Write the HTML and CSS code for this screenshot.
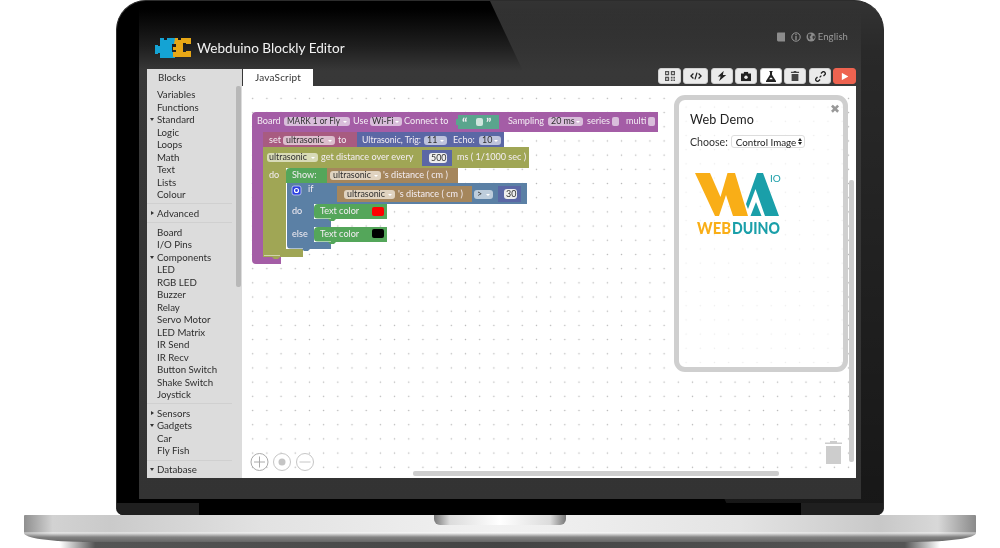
FILE: index.html
```html
<!DOCTYPE html>
<html lang="en">
<head>
<meta charset="utf-8">
<title>Webduino Blockly Editor</title>
<link rel="stylesheet" href="styles.css">
</head>
<body>
<div class="laptop">
  <div class="lid">
    <div class="display">
      <header class="header">
        <svg class="logo" viewBox="0 0 36 20" width="36" height="20">
          <path class="logo-blue" d="M5 0h4v2h3V0h8v6h-3v8h3v6H5v-5H3v1H0V7h3v1h2z"/>
          <path class="logo-yellow" d="M20 0h3v2h3V0h10v6h-5V5h-3v9h3v-1h5v6H18v-5h3v-2h-3V9h3V6h-2z"/>
        </svg>
        <h1 class="title">Webduino Blockly Editor</h1>
        <nav class="links">
          <svg class="link-icon" viewBox="0 0 9 10" width="8" height="10"><path d="M1 0h8v10H1.500Q0 10 0 8.500V1Q0 0 1 0z"/></svg>
          <svg class="link-icon info" viewBox="0 0 10 10" width="10" height="10"><circle class="ring" cx="5" cy="5" r="4.200"/><path d="M4.400 2h1.200v1.200H4.400zM4.400 4h1.200v4H4.400z"/></svg>
          <svg class="link-icon globe" viewBox="0 0 10 10" width="10" height="10"><circle cx="5" cy="5" r="4.500"/><path class="cut" d="M2 2.500l2-1 1.500 1-1 1.500-1 1 1 1.500-.5 1.500-2-2zM6.500 4l2-.5.500 2-1.500 2-1-1.500z"/></svg>
          <span class="lang">English</span>
        </nav>
      </header>
      <div class="app">
        <aside class="side">
          <div class="side-tab">Blocks</div>
          <div class="side-list">
            <div class="cat-group">
              <div class="cat">Variables</div>
              <div class="cat">Functions</div>
              <div class="cat open">Standard</div>
              <div class="cat">Logic</div>
              <div class="cat">Loops</div>
              <div class="cat">Math</div>
              <div class="cat">Text</div>
              <div class="cat">Lists</div>
              <div class="cat">Colour</div>
            </div>
            <div class="cat-group">
              <div class="cat closed">Advanced</div>
            </div>
            <div class="cat-group">
              <div class="cat">Board</div>
              <div class="cat">I/O Pins</div>
              <div class="cat open">Components</div>
              <div class="cat">LED</div>
              <div class="cat">RGB LED</div>
              <div class="cat">Buzzer</div>
              <div class="cat">Relay</div>
              <div class="cat">Servo Motor</div>
              <div class="cat">LED Matrix</div>
              <div class="cat">IR Send</div>
              <div class="cat">IR Recv</div>
              <div class="cat">Button Switch</div>
              <div class="cat">Shake Switch</div>
              <div class="cat">Joystick</div>
            </div>
            <div class="cat-group">
              <div class="cat closed">Sensors</div>
              <div class="cat open">Gadgets</div>
              <div class="cat">Car</div>
              <div class="cat">Fly Fish</div>
            </div>
            <div class="cat-group">
              <div class="cat open">Database</div>
            </div>
          </div>
          <div class="side-scroll"></div>
        </aside>
        <main class="main">
          <div class="tabbar">
            <div class="tab">JavaScript</div>
            <div class="tools">
              <button class="tool dim wide"><svg viewBox="0 0 12 12" width="12" height="12"><path d="M0 0h5v5H0zM7 0h5v5H7zM0 7h5v5H0zM7 7h2v2H7zM10 7h2v2h-2zM7 10h2v2H7zM10 10h2v2h-2z"/><path class="hole" d="M1.500 1.500h2v2h-2zM8.500 1.500h2v2h-2zM1.500 8.500h2v2h-2z"/></svg></button>
              <button class="tool wider"><svg viewBox="0 0 14 10" width="14" height="10"><path class="line" d="M4 2L1 5l3 3M10 2l3 3-3 3M8.200 1L5.800 9"/></svg></button>
              <button class="tool shift"><svg viewBox="0 0 12 12" width="12" height="12"><path d="M8 0L1 6.500h3.500L2.500 12 11 4.800H7z"/></svg></button>
              <button class="tool"><svg viewBox="0 0 12 11" width="12" height="11"><path d="M0 2h3.500V0h5v2H12v9H0z"/><circle class="hole" cx="6" cy="6.300" r="2"/></svg></button>
              <button class="tool white shift"><svg viewBox="0 0 12 13" width="12" height="13"><path d="M4 0h4v1H7.200v3.500L12 12v1H0v-1l4.800-7.500V1H4z"/><path class="hole" d="M5 8h2l1 1.600H4z"/></svg></button>
              <button class="tool dim2"><svg viewBox="0 0 10 12" width="10" height="12"><path d="M3.500 0h3v1H10v1.500H0V1h3.500zM1 3.500h8V12H1z"/></svg></button>
              <button class="tool shift"><svg viewBox="0 0 13 13" width="13" height="13"><path class="line" d="M5.500 7.500l2-2M7 3l1.500-1.500a2 2 0 0 1 3 3L10 6M6 10l-1.500 1.500a2 2 0 0 1-3-3L3 7"/></svg></button>
              <button class="tool run wide"><svg viewBox="0 0 8 9" width="8" height="9"><path d="M0 0l8 4.500L0 9z"/></svg></button>
            </div>
          </div>
          <section class="workspace">
            <svg class="blocks" viewBox="242 86 614 392" width="614" height="392">
              <path class="b-purple" d="M252 116q0-4 4-4h402v20H263v124h18v8H256q-4 0-4-4z"/>
              <path class="b-pink" d="M263 132h94v15h-77l-2 2h-4l-2-2H263z"/>
              <rect class="b-indigo" x="357" y="132" width="147" height="15"/>
              <path class="b-olive" d="M263 147h266v21H286v81h17v8h-23l-2 2h-4l-2-2H263z"/>
              <path class="b-green" d="M290 168h37v15h-41v-11q0-4 4-4z"/>
              <rect class="b-brown" x="327" y="168" width="131" height="15"/>
              <path class="b-steel" d="M287 183h240v21H314v15h17v8h-17v15h17v7h-21l-2 2h-4l-2-2h-11q-4 0-4-4z"/>
              <rect class="b-brown" x="337" y="186" width="135" height="16"/>
              <rect class="b-indigo" x="498" y="186" width="23" height="16"/>
              <rect class="b-indigo" x="422" y="150" width="30" height="16"/>
              <path class="b-green" d="M318 204h69v15h-51l-2 2h-4l-2-2h-10q-4 0-4-4v-7q0-4 4-4z"/>
              <path class="b-green" d="M318 227h69v15h-51l-2 2h-4l-2-2h-10q-4 0-4-4v-7q0-4 4-4z"/>
              <rect class="b-teal" x="458" y="115" width="41" height="14"/>
              <rect class="plug-teal" x="456" y="119" width="3" height="6"/>
              <path class="hl" d="M264 255.500h16M287 248.500h16M315 241.500h16M315 218.500h16"/>

              <text class="t" x="257" y="124">Board</text>
              <rect class="f-purple" x="284" y="117" width="66" height="9" rx="3"/>
              <text class="d" x="287" y="124" textLength="53" lengthAdjust="spacingAndGlyphs">MARK 1 or Fly</text>
              <path class="arr" d="M343 121h4l-2 2z"/>
              <text class="t" x="353" y="124">Use</text>
              <rect class="f-purple" x="370" y="117" width="32" height="9" rx="3"/>
              <text class="d" x="372" y="124">Wi-Fi</text>
              <path class="arr" d="M395 121h4l-2 2z"/>
              <text class="t" x="404" y="124">Connect to</text>
              <text class="t big" x="462" y="128">“</text>
              <rect class="f-str" x="476" y="118" width="7" height="8" rx="2"/>
              <text class="t big" x="486" y="128">”</text>
              <text class="t" x="508" y="124">Sampling</text>
              <rect class="f-purple" x="548" y="117" width="35" height="9" rx="3"/>
              <text class="d" x="551" y="124">20 ms</text>
              <path class="arr" d="M576 121h4l-2 2z"/>
              <text class="t" x="587" y="124">series</text>
              <rect class="f-purple" x="612" y="117" width="7" height="9" rx="2"/>
              <text class="t" x="626" y="124">multi</text>
              <rect class="f-purple" x="648" y="117" width="7" height="9" rx="2"/>

              <text class="t" x="269" y="143">set</text>
              <rect class="f-pink" x="283" y="136" width="52" height="9" rx="3"/>
              <text class="d" x="286" y="143">ultrasonic</text>
              <path class="arr" d="M328 140h4l-2 2z"/>
              <text class="t" x="338" y="143">to</text>
              <text class="t" x="362" y="143" textLength="59" lengthAdjust="spacingAndGlyphs">Ultrasonic, Trig:</text>
              <rect class="f-indigo" x="424" y="136" width="23" height="9" rx="3"/>
              <text class="d" x="427" y="143">11</text>
              <path class="arr" d="M440 140h4l-2 2z"/>
              <text class="t" x="453" y="143">Echo:</text>
              <rect class="f-indigo" x="479" y="136" width="22" height="9" rx="3"/>
              <text class="d" x="482" y="143">10</text>
              <path class="arr" d="M494 140h4l-2 2z"/>

              <rect class="f-olive" x="267" y="153" width="51" height="9" rx="3"/>
              <text class="d" x="269" y="160">ultrasonic</text>
              <path class="arr" d="M311 157h4l-2 2z"/>
              <text class="t" x="321" y="160">get distance over every</text>
              <rect class="f-white" x="429" y="153" width="18" height="10" rx="3"/>
              <text class="d" x="431" y="161">500</text>
              <text class="t" x="457" y="160">ms ( 1/1000 sec )</text>

              <text class="t" x="269" y="178">do</text>
              <text class="t" x="292" y="178">Show:</text>
              <rect class="f-brown" x="330" y="171" width="51" height="9" rx="3"/>
              <text class="d" x="333" y="178">ultrasonic</text>
              <path class="arr" d="M374 175h4l-2 2z"/>
              <text class="t" x="383" y="178">'s distance ( cm )</text>

              <rect class="gear" x="292" y="186" width="9" height="9" rx="2"/>
              <circle class="gear-c" cx="296.500" cy="190.500" r="2"/>
              <text class="t" x="308" y="192">if</text>
              <rect class="f-brown" x="344" y="190" width="51" height="9" rx="3"/>
              <text class="d" x="347" y="197">ultrasonic</text>
              <path class="arr" d="M388 194h4l-2 2z"/>
              <text class="t" x="398" y="197">'s distance ( cm )</text>
              <rect class="f-steel" x="474" y="190" width="19" height="9" rx="3"/>
              <text class="d" x="477" y="197">&gt;</text>
              <path class="arr" d="M486 194h4l-2 2z"/>
              <rect class="f-white" x="504" y="189" width="13" height="10" rx="3"/>
              <text class="d" x="506" y="197">30</text>

              <text class="t" x="292" y="214">do</text>
              <text class="t" x="320" y="214">Text color</text>
              <rect class="c-red" x="372" y="207" width="12" height="9" rx="2"/>
              <text class="t" x="292" y="237">else</text>
              <text class="t" x="320" y="237">Text color</text>
              <rect class="c-black" x="372" y="229" width="12" height="9" rx="2"/>

              <circle class="zoom-ring" cx="259.500" cy="462" r="8.500"/>
              <path class="zoom-line" d="M254 462h11M259.500 456.500v11"/>
              <circle class="zoom-ring light" cx="282" cy="462" r="8.500"/>
              <circle class="zoom-dot" cx="282" cy="462" r="3.500"/>
              <circle class="zoom-ring light" cx="305" cy="462" r="8.500"/>
              <path class="zoom-line light" d="M299.500 462h11"/>
              <path class="bin" d="M830 441h7v1.500h5v1.500h-17v-1.500h5zM826 446h15v18h-15z"/>
            </svg>
            <div class="panel">
              <button class="close">✖</button>
              <h2 class="panel-title">Web Demo</h2>
              <div class="choose">
                <span>Choose:</span>
                <span class="select">Control Image<span class="spin"></span></span>
              </div>
              <svg class="wa" viewBox="0 0 86 64" width="86" height="64">
                <path class="wa-y" d="M0 0h15l10.500 24 7-24H40l13 43H38l-7-21-7 21h-4z"/>
                <path class="wa-t" d="M51 31L62 0h6l16 43H70L60.500 16 53 36zM61 29l5.500 14h-11z"/>
                <text class="wa-io" x="75" y="9">IO</text>
                <text class="wa-word wa-web" x="2" y="61" textLength="34" lengthAdjust="spacingAndGlyphs">WEB</text>
                <text class="wa-word wa-duino" x="37" y="61" textLength="48" lengthAdjust="spacingAndGlyphs">DUINO</text>
              </svg>
            </div>
            <div class="vscroll"></div>
            <div class="hscroll"></div>
          </section>
        </main>
      </div>
    </div>
    <div class="hinge">
      <div class="hinge-side"></div>
      <div class="hinge-mid"></div>
      <div class="hinge-side"></div>
    </div>
  </div>
  <div class="base"><div class="notch"></div></div>
  <div class="foot"></div>
</div>
</body>
</html>
```
FILE: styles.css
```css
* { box-sizing: border-box; }
html, body { margin: 0; padding: 0; }
body {
  width: 1000px;
  height: 548px;
  overflow: hidden;
  background: #fff;
  font-family: "Lato", "Liberation Sans", sans-serif;
  color: #2b2b2b;
}
.laptop { display: flex; flex-direction: column; align-items: center; width: 1000px; }

/* Lid */
.lid {
  position: relative;
  width: 768px;
  height: 515px;
  padding: 0 22px;
  display: flex;
  flex-direction: column;
  background: #000;
  border: 1px solid #2c2c2c;
  border-bottom: 0;
  border-radius: 30px 30px 7px 7px;
  overflow: hidden;
}
.lid::before {
  content: "";
  position: absolute;
  inset: 0;
  background: linear-gradient(rgba(255,255,255,.2), rgba(255,255,255,.16) 10%, rgba(255,255,255,.09));
  clip-path: polygon(373px 0, 100% 0, 100% 100%, 615px 100%);
}
.display {
  position: relative;
  width: 722px;
  height: 498px;
  flex: none;
  background: linear-gradient(rgba(70,70,70,0) 8px, rgba(60,60,60,.5) 45px, #383838 70px, #333 100%);
}
.header {
  height: 67px;
  padding: 37px 13px 0 16px;
  display: flex;
  align-items: flex-start;
  filter: blur(.25px);
}
.logo { flex: none; margin-right: 6px; }
.logo-blue { fill: #14a3d4; }
.logo-yellow { fill: #e7a716; }
.title {
  margin: 2px 0 0;
  font-size: 13.6px;
  line-height: 16px;
  font-weight: 400;
  color: #f2f2f2;
}
.links {
  margin-left: auto;
  margin-top: -7px;
  display: flex;
  align-items: center;
  gap: 4px;
  color: #9b9b9b;
  font-size: 9.5px;
}
.link-icon { fill: #8c8c8c; }
.link-icon.info { margin-left: 2px; fill: #9a9a9a; margin-right: 1px; }
.ring { fill: none; stroke: #9a9a9a; stroke-width: 1; }
.cut { fill: #3a3a3a; }
.lang { margin-left: -2px; letter-spacing: .1px; }

/* App */
.app {
  margin: 1px 0 0 8px;
  width: 709px;
  height: 409px;
  display: flex;
  position: relative;
  filter: blur(.3px);
}
.side {
  position: relative;
  width: 95px;
  flex: none;
  background: #dcdcdc;
  font-size: 9.7px;
  color: #2e2e2e;
  overflow: hidden;
}
.side-tab { height: 17px; padding: 2px 0 0 11px; line-height: 12px; }
.side-list { padding-top: 2px; }
.cat-group { padding-bottom: 2.75px; margin: 0 10px 2.5px 0; border-bottom: 1px solid #d0d0d0; }
.cat-group:last-child { border: 0; }
.cat { position: relative; height: 12.5px; line-height: 12.5px; padding-left: 10px; }
.open::before, .closed::before {
  content: "";
  position: absolute;
  left: 3px;
  top: 5px;
  border-style: solid;
  border-color: transparent;
}
.open::before { border-width: 3px 2.5px 0; border-top-color: #333; }
.closed::before { top: 4px; left: 4px; border-width: 2.5px 0 2.5px 3px; border-left-color: #333; }
.side-scroll {
  position: absolute;
  left: 89px;
  top: 17px;
  width: 5px;
  height: 201px;
  background: #b8b8b8;
  border-radius: 2px;
}
.main { flex: 1; display: flex; flex-direction: column; min-width: 0; margin-left: 1px; }
.tabbar { height: 17px; display: flex; align-items: flex-start; justify-content: space-between; }
.tab {
  width: 70px;
  height: 17px;
  background: #fff;
  font-size: 10px;
  line-height: 16px;
  text-align: center;
  color: #333;
  letter-spacing: .2px;
}
.tools { display: flex; gap: 2px; margin-top: -1px; }
.tool {
  width: 22px;
  height: 16px;
  padding: 0;
  border: 1px solid #cfcfcf;
  border-radius: 3px;
  background: #ebebeb;
  display: flex;
  align-items: center;
  justify-content: center;
}
.tool svg { fill: #222; display: block; transform: scale(.85); }
.tool.dim svg { fill: #555; }
.tool.dim2 svg { fill: #444; }
.tool.white { background: #fff; }
.tool .hole { fill: #ebebeb; }
.tool.white .hole { fill: #fff; }
.tool .line { fill: none; stroke: #222; stroke-width: 1.500; }
.wide { width: 23px; }
.wider { width: 25px; }
.shift { margin-left: 1px; }
.run { background: #ee6350; border-color: #ee6350; }
.tool.run svg { fill: #fff; }

/* Workspace */
.workspace {
  position: relative;
  flex: 1;
  background-color: #fff;
  background-image: radial-gradient(circle, #b4b4b4 .7px, transparent 1px);
  background-size: 14.2px 14.2px;
  background-position: 3.6px 5.3px;
  overflow: hidden;
  margin-left: -1px;
}
.blocks { position: absolute; left: 0; top: 0; font-family: "Lato", "Liberation Sans", sans-serif; }
.b-purple { fill: #a45da6; }
.b-pink { fill: #a85b80; }
.b-indigo { fill: #5b67a5; }
.b-olive { fill: #a0a655; }
.b-green { fill: #54a65a; }
.b-brown { fill: #a5865c; }
.b-steel { fill: #5b80a5; }
.b-teal { fill: #5aa58d; }
.plug-teal { fill: #5aa58d; }
.hl { fill: none; stroke: #fff; stroke-width: 1; opacity: .5; }
.t { fill: #f3edf3; font-size: 9.100px; }
.t.big { font-size: 14px; font-weight: 700; }
.d { fill: #2f2f2f; font-size: 8.900px; }
.arr { fill: #fff; }
.f-purple { fill: #d9bedb; }
.f-pink { fill: #dcbecd; }
.f-indigo { fill: #bec3dc; }
.f-olive { fill: #d8dbb8; }
.f-brown { fill: #e0d3c0; }
.f-steel { fill: #becddc; }
.f-white { fill: #eee; }
.f-str { fill: #cfe6dd; }
.gear { fill: #2b3fe0; stroke: #dfe3ff; stroke-width: .7; }
.gear-c { fill: none; stroke: #fff; stroke-width: 1.200; }
.c-red { fill: #f00; }
.c-black { fill: #000; }
.zoom-ring { fill: #fff; stroke: #aaa; stroke-width: 1; }
.zoom-ring.light { stroke: #c6c6c6; }
.zoom-line { fill: none; stroke: #aaa; stroke-width: 1; }
.zoom-line.light { stroke: #c6c6c6; }
.zoom-dot { fill: #c4c4c4; }
.bin { fill: #cdcdcd; }

/* Web demo panel */
.panel {
  position: absolute;
  left: 432px;
  top: 9px;
  width: 174px;
  height: 277px;
  border: 5px solid #cfcfcf;
  border-radius: 11px;
  padding: 12px 12px 0 11px;
  background-color: #fff;
  background-image: radial-gradient(circle, #ececec .7px, transparent 1px);
  background-size: 14.2px 14.2px;
}
.close {
  position: absolute;
  right: 3px;
  top: 2px;
  padding: 0;
  border: 0;
  background: none;
  font-size: 12px;
  line-height: 14px;
  color: #999;
  font-family: "DejaVu Sans", sans-serif;
}
.panel-title {
  margin: 0;
  font-size: 12.6px;
  line-height: 16px;
  font-weight: 400;
  color: #222;
  letter-spacing: .15px;
}
.choose {
  margin-top: 7px;
  display: flex;
  align-items: center;
  gap: 3px;
  font-size: 10.600px;
  color: #333;
}
.select {
  width: 74px;
  height: 13px;
  display: flex;
  align-items: center;
  justify-content: space-between;
  padding: 0 2px 0 4px;
  border: 1px solid #ddd;
  border-radius: 3px;
  font-size: 9.800px;
  color: #222;
  background: #fff;
  white-space: nowrap;
}
.spin { position: relative; display: block; width: 4px; height: 9px; flex: none; }
.spin::before, .spin::after {
  content: "";
  position: absolute;
  left: 0;
  border: 2px solid transparent;
}
.spin::before { top: -1px; border-bottom: 3px solid #222; }
.spin::after { bottom: -1px; border-top: 3px solid #222; }
.wa { display: block; margin: 25px 0 0 5px; overflow: visible; }
.wa-y { fill: #f9ae17; }
.wa-t { fill: #1a9fa9; }
.wa-io { fill: #1a9fa9; font-size: 10px; }
.wa-word { font-size: 16.500px; font-weight: 900; font-family: "Lato", "Liberation Sans", sans-serif; }
.wa-web { fill: #f9ae17; }
.wa-duino { fill: #1a9fa9; }
.vscroll {
  position: absolute;
  left: 607px;
  top: 94px;
  width: 5px;
  height: 282px;
  background: #cdcdcd;
  border-radius: 2px;
}
.hscroll {
  position: absolute;
  left: 171px;
  top: 385px;
  width: 366px;
  height: 5px;
  background: #cdcdcd;
  border-radius: 2px;
}

/* Hinge */
.hinge { position: relative; flex: 1; display: flex; margin: 0 -22px; padding-top: 4px; }
.hinge-side { width: 82px; background: #1f1f1f; }
.hinge-mid { flex: 1; background: #000; }

/* Base */
.base {
  position: relative;
  width: 952px;
  height: 27px;
  flex: none;
  border-radius: 1px 1px 60px 60px / 1px 1px 9px 9px;
  background:
    linear-gradient(rgba(255,255,255,0) 62%, rgba(255,255,255,.5) 66%, rgba(120,120,120,.9) 82%, #666 100%),
    linear-gradient(90deg, #8f8f8f, #d2d2d2 3%, #cacaca 9%, #e2e2e2 25%, #f2f2f2 50%, #e4e4e4 75%, #c8c8c8 90%, #d8d8d8 96%, #8a8a8a);
}
.notch {
  position: absolute;
  left: 410px;
  top: 0;
  width: 132px;
  height: 10px;
  border-radius: 0 0 6px 6px;
  background: linear-gradient(90deg, #777, #dcdcdc 12%, #fff 50%, #dcdcdc 88%, #777);
}
.foot {
  width: 880px;
  height: 6px;
  flex: none;
  background: linear-gradient(90deg, rgba(80,80,80,0), #555 4%, #444 50%, #555 96%, rgba(80,80,80,0));
}
```
